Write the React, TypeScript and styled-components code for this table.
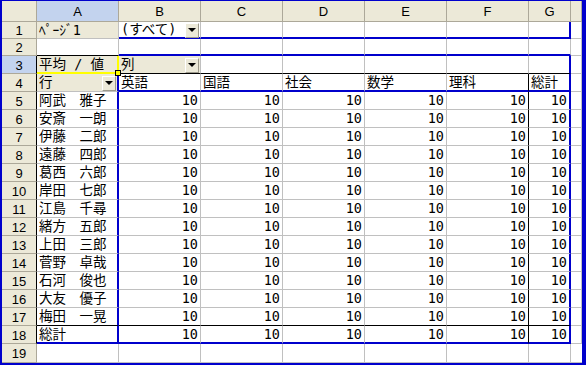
import React from "react";
import styled, { createGlobalStyle } from "styled-components";

const BLUE = "#0000CC";
const GRID = "#C0C0C0";
const FACE = "#ECE9D8";
const HEAD_LINE = "#ACA899";
const SEL = "#C3D3EE";

const Global = createGlobalStyle`
  html, body { margin: 0; padding: 0; background: #fff; }
  body { width: 586px; height: 365px; overflow: hidden; }
`;

type Edge = "grid" | "blue" | "black" | "yellow";
const line = (e: Edge = "grid") =>
  ({
    grid: `1px solid ${GRID}`,
    blue: `2px solid ${BLUE}`,
    black: "1px solid #000",
    yellow: "2px solid #FFFF00",
  })[e];

const Frame = styled.div`
  width: 586px;
  height: 365px;
  box-sizing: border-box;
  border-style: solid;
  border-color: ${BLUE};
  border-width: 1px 4px 2px 2px;
  display: flex;
  flex-direction: column;
  background: #fff;
  overflow: hidden;
`;

const Row = styled.div<{ $h: number }>`
  display: grid;
  grid-template-columns: 35px repeat(6, 82px) 42px 1fr;
  grid-template-rows: ${(p) => p.$h}px;
  height: ${(p) => p.$h}px;
  flex: 0 0 auto;
  background: #fff;
`;

const ColHead = styled.div<{ $sel?: boolean }>`
  box-sizing: border-box;
  display: flex;
  align-items: center;
  justify-content: center;
  background: ${(p) => (p.$sel ? SEL : FACE)};
  border-right: 1px solid ${HEAD_LINE};
  border-bottom: 1px solid ${HEAD_LINE};
  font: 13px/1 "Liberation Sans", Arial, sans-serif;
  color: #000;
`;

const RowHead = styled.div<{ $sel?: boolean; $dark?: boolean }>`
  box-sizing: border-box;
  display: flex;
  align-items: center;
  justify-content: center;
  padding-top: 1px;
  background: ${(p) => (p.$sel ? SEL : FACE)};
  border-right: 1px solid ${(p) => (p.$dark ? "#000" : HEAD_LINE)};
  border-bottom: 1px solid ${HEAD_LINE};
  font: 13px/1 "Liberation Sans", Arial, sans-serif;
  color: #000;
`;

const Cell = styled.div<{
  $bg?: string;
  $num?: boolean;
  $b?: Edge;
  $r?: Edge;
  $handle?: boolean;
}>`
  box-sizing: border-box;
  position: relative;
  display: flex;
  align-items: center;
  justify-content: ${(p) => (p.$num ? "flex-end" : "flex-start")};
  padding: 1px 2px 0;
  min-width: 0;
  background: ${(p) => p.$bg ?? "#fff"};
  border-bottom: ${(p) => line(p.$b)};
  border-right: ${(p) => line(p.$r)};
  font: 13.5px/1 "DejaVu Sans Mono", "Noto Sans CJK JP", monospace;
  color: #000;
  white-space: nowrap;

  ${(p) =>
    p.$handle &&
    `&::after {
      content: "";
      position: absolute;
      right: -4px;
      bottom: -4px;
      width: 4px;
      height: 4px;
      background: #FFFF00;
      border: 1px solid #000;
      z-index: 2;
    }`}
`;

// vertical gridline offsets (right edge of A..G) inside the empty last row
const lineAt = [81, 163, 245, 327, 409, 491, 533];

const BlankCells = styled.div`
  grid-column: 2 / -1;
  box-sizing: border-box;
  border-bottom: 1px solid ${GRID};
  background-color: #fff;
  background-image: ${lineAt.map(() => `linear-gradient(${GRID}, ${GRID})`).join(", ")};
  background-size: 1px 100%;
  background-repeat: no-repeat;
  background-position: ${lineAt.map((x) => `${x}px 0`).join(", ")};
`;

const DropBtn = styled.span`
  box-sizing: border-box;
  margin-left: auto;
  margin-right: -1px;
  width: 14px;
  height: 15px;
  display: flex;
  align-items: center;
  justify-content: center;
  background: ${FACE};
  border: 1px solid;
  border-color: #fff #9d9a8c #9d9a8c #fff;

  &::before {
    content: "";
    border-left: 4px solid transparent;
    border-right: 4px solid transparent;
    border-top: 4px solid #000;
  }
`;

const cols = ["A", "B", "C", "D", "E", "F", "G", ""];
const subjects = ["英語", "国語", "社会", "数学", "理科", "総計"];
const names = [
  "阿武　雅子",
  "安斎　一朗",
  "伊藤　二郎",
  "遠藤　四郎",
  "葛西　六郎",
  "岸田　七郎",
  "江島　千尋",
  "緒方　五郎",
  "上田　三郎",
  "菅野　卓哉",
  "石河　俊也",
  "大友　優子",
  "梅田　一晃",
  "総計",
];

// right edge of columns B..G inside the pivot body
const bodyRight = (i: number): Edge => (i === 4 ? "black" : i === 5 ? "blue" : "grid");

const App = () => {
  return (
    <>
      <Global />
      <Frame>
        <Row $h={21}>
          <ColHead />
          {cols.map((c) => (
            <ColHead key={c || "h"} $sel={c === "A"}>
              {c}
            </ColHead>
          ))}
        </Row>

        {/* 1: page field */}
        <Row $h={17}>
          <RowHead>1</RowHead>
          <Cell $bg={FACE}>ﾍﾟｰｼﾞ1</Cell>
          <Cell $b="blue">
            (すべて)
            <DropBtn />
          </Cell>
          {[0, 1, 2, 3].map((i) => (
            <Cell key={i} $b="blue" />
          ))}
          <Cell $b="blue" $r="blue" />
          <Cell />
        </Row>

        {/* 2 */}
        <Row $h={17}>
          <RowHead>2</RowHead>
          <Cell $b="black" />
          {[0, 1, 2, 3, 4, 5].map((i) => (
            <Cell key={i} $b="blue" />
          ))}
          <Cell />
        </Row>

        {/* 3: data + column field */}
        <Row $h={18}>
          <RowHead $sel $dark>
            3
          </RowHead>
          <Cell $bg={FACE} $b="yellow" $r="yellow" $handle>
            平均 / 値
          </Cell>
          <Cell $bg={FACE} $b="black">
            列
            <DropBtn />
          </Cell>
          {[0, 1, 2, 3].map((i) => (
            <Cell key={i} $b="black" />
          ))}
          <Cell $b="black" $r="blue" />
          <Cell />
        </Row>

        {/* 4: row field + subjects */}
        <Row $h={18}>
          <RowHead $dark>4</RowHead>
          <Cell $bg={FACE} $r="blue">
            行
            <DropBtn />
          </Cell>
          {subjects.map((s, i) => (
            <Cell key={s} $b="blue" $r={bodyRight(i)}>
              {s}
            </Cell>
          ))}
          <Cell />
        </Row>

        {names.map((n, r) => {
          const total = r === names.length - 1;
          const b: Edge = total ? "blue" : r === names.length - 2 ? "black" : "grid";
          return (
            <Row key={n} $h={18}>
              <RowHead $dark>{r + 5}</RowHead>
              <Cell $b={b} $r="blue">
                {n}
              </Cell>
              {subjects.map((s, i) => (
                <Cell key={s} $num $b={b} $r={bodyRight(i)}>
                  10
                </Cell>
              ))}
              <Cell />
            </Row>
          );
        })}

        {/* 19: empty sheet row below the pivot */}
        <Row $h={19}>
          <RowHead>19</RowHead>
          <BlankCells />
        </Row>
      </Frame>
    </>
  );
};

export default App;
